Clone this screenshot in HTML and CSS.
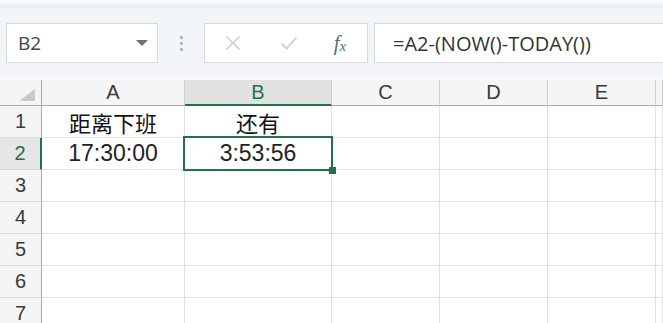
FILE: index.html
```html
<!DOCTYPE html>
<html>
<head>
    <meta charset="UTF-8">
    <title>Sheet</title>
    <link rel="stylesheet" href="styles.css">
</head>
<body>
    <!-- name box and formula bar -->
    <div class="toolbar">
        <div class="namebox">
            <span>B2</span>
            <svg class="arrow" width="12" height="7" viewBox="0 0 12 7"><path d="M0 0H12L6 6Z" fill="#707070"/></svg>
        </div>
        <div class="grip"><i></i><i></i><i></i></div>
        <div class="fxbuttons">
            <span class="btn">
                <svg width="16" height="16" viewBox="0 0 16 16"><path d="M1.5 1.5L14.5 14.5M14.5 1.5L1.5 14.5" stroke="#cfcfcf" stroke-width="1.6" fill="none"/></svg>
            </span>
            <span class="btn">
                <svg width="18" height="14" viewBox="0 0 18 14"><path d="M1.5 7.5L6.5 12.5L16.5 1.5" stroke="#cfcfcf" stroke-width="1.8" fill="none"/></svg>
            </span>
            <span class="btn fx">f<small>x</small></span>
        </div>
        <div class="formula">=A2-(NOW()-TODAY())</div>
    </div>

    <!-- worksheet grid -->
    <div class="sheet">
        <div class="corner">
            <svg width="16" height="12" viewBox="0 0 16 12"><path d="M16 0V12H0Z" fill="#c9c9c9"/></svg>
        </div>
        <div class="colhead">A</div>
        <div class="colhead current">B</div>
        <div class="colhead">C</div>
        <div class="colhead">D</div>
        <div class="colhead">E</div>
        <div class="colhead"></div>

        <div class="rowhead">1</div>
        <div class="cell">距离下班</div>
        <div class="cell">还有</div>
        <div class="cell"></div><div class="cell"></div><div class="cell"></div><div class="cell"></div>

        <div class="rowhead current">2</div>
        <div class="cell num">17:30:00</div>
        <div class="cell num selected">3:53:56</div>
        <div class="cell"></div><div class="cell"></div><div class="cell"></div><div class="cell"></div>

        <div class="rowhead">3</div>
        <div class="cell"></div><div class="cell"></div><div class="cell"></div><div class="cell"></div><div class="cell"></div><div class="cell"></div>

        <div class="rowhead">4</div>
        <div class="cell"></div><div class="cell"></div><div class="cell"></div><div class="cell"></div><div class="cell"></div><div class="cell"></div>

        <div class="rowhead">5</div>
        <div class="cell"></div><div class="cell"></div><div class="cell"></div><div class="cell"></div><div class="cell"></div><div class="cell"></div>

        <div class="rowhead">6</div>
        <div class="cell"></div><div class="cell"></div><div class="cell"></div><div class="cell"></div><div class="cell"></div><div class="cell"></div>

        <div class="rowhead">7</div>
        <div class="cell"></div><div class="cell"></div><div class="cell"></div><div class="cell"></div><div class="cell"></div><div class="cell"></div>
    </div>
</body>
</html>
```

FILE: styles.css
```css
body {
    margin: 0;
    width: 663px;
    height: 323px;
    overflow: hidden;
    background-color: #ffffff;
    font-family: "Open Sans", "Noto Sans", sans-serif;
}
.toolbar {
    display: flex;
    height: 80px;
    box-sizing: border-box;
    padding: 23px 0 0 6px;
    background: linear-gradient(#ffffff 0px, #e9edf2 7px, #f2f5f8 9px, #f2f5f8 72px, #f8fafc 80px);
}
.namebox {
    display: flex;
    align-items: center;
    justify-content: space-between;
    width: 152px;
    height: 40px;
    box-sizing: border-box;
    padding: 0 9px 0 11px;
    background-color: #ffffff;
    border: 1px solid #d8dce1;
    color: #444444;
    font-size: 19px;
}
.grip {
    display: flex;
    flex-direction: column;
    justify-content: center;
    align-items: center;
    gap: 3px;
    width: 46px;
    height: 40px;
}
.grip i {
    width: 3px;
    height: 3px;
    border-radius: 50%;
    background-color: #a3a8ae;
}
.fxbuttons {
    display: flex;
    align-items: center;
    width: 164px;
    height: 40px;
    box-sizing: border-box;
    background-color: #ffffff;
    border: 1px solid #d8dce1;
}
.btn {
    display: flex;
    justify-content: center;
    align-items: center;
    width: 56px;
    height: 38px;
}
.fx {
    width: 46px;
    font-family: "Liberation Serif", serif;
    font-style: italic;
    font-size: 21px;
    color: #5f6a75;
}
.fx small {
    font-size: 15px;
    position: relative;
    top: 3px;
}
.formula {
    flex: 1;
    display: flex;
    align-items: center;
    height: 40px;
    margin-left: 6px;
    box-sizing: border-box;
    padding-left: 18px;
    background-color: #ffffff;
    border: 1px solid #d8dce1;
    border-right: none;
    color: #333333;
    font-size: 20px;
}
.sheet {
    display: grid;
    grid-template-columns: 42px 143px 147px 108px 108px 108px 7px;
    grid-template-rows: 26px repeat(7, 32px);
}
.corner {
    display: flex;
    justify-content: flex-end;
    align-items: flex-end;
    padding: 0 6px 4px 0;
    background-color: #f5f5f5;
    border-right: 1px solid #a9acaf;
    border-bottom: 1px solid #a9acaf;
}
.colhead {
    display: flex;
    justify-content: center;
    align-items: center;
    background-color: #f5f5f5;
    border-right: 1px solid #d0d0d0;
    border-bottom: 1px solid #a9acaf;
    color: #3a3a3a;
    font-family: "Liberation Sans", sans-serif;
    font-size: 20px;
}
.colhead.current {
    background-color: #e1e1e1;
    border-bottom: 2px solid #217346;
    color: #217346;
}
.rowhead {
    display: flex;
    justify-content: center;
    align-items: center;
    background-color: #f5f5f5;
    border-right: 1px solid #a9acaf;
    border-bottom: 1px solid #dadada;
    color: #3a3a3a;
    font-family: "Liberation Sans", sans-serif;
    font-size: 20px;
}
.rowhead.current {
    background-color: #e6e6e6;
    border-right: 2px solid #217346;
    color: #217346;
}
.cell {
    position: relative;
    display: flex;
    justify-content: center;
    align-items: center;
    border-right: 1px solid #e2e2e2;
    border-bottom: 1px solid #e2e2e2;
    color: #111111;
    font-family: "Noto Sans CJK SC", sans-serif;
    font-size: 22px;
}
.cell.num {
    font-family: "Liberation Sans", sans-serif;
    font-size: 23px;
    color: #222222;
}
.selected {
    z-index: 1;
}
.selected::before {
    content: "";
    position: absolute;
    top: -2px;
    left: -2px;
    right: -2px;
    bottom: -2px;
    border: 2px solid #217346;
}
.selected::after {
    content: "";
    position: absolute;
    right: -5px;
    bottom: -5px;
    width: 7px;
    height: 7px;
    background-color: #217346;
}
```
